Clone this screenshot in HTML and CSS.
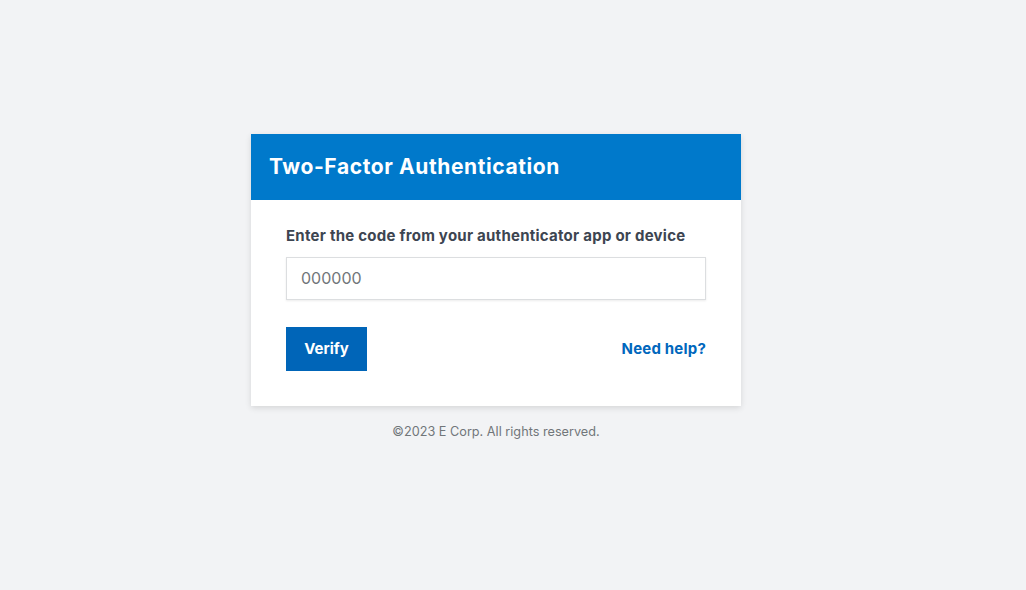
FILE: index.html
```html
<!DOCTYPE html>
<html lang="en">
<head>
<meta charset="utf-8">
<title>Two-Factor Authentication</title>
<link rel="stylesheet" href="styles.css">
</head>
<body>
<main class="page">
  <div class="wrap">
    <section class="card">
      <header class="card-header">
        <h1>Two-Factor Authentication</h1>
      </header>
      <form class="card-body">
        <label class="label" for="code">Enter the code from your authenticator app or device</label>
        <input class="input" id="code" type="text" placeholder="000000">
        <div class="actions">
          <button class="btn" type="button">Verify</button>
          <a class="help" href="#">Need help?</a>
        </div>
      </form>
    </section>
    <p class="footer">©2023 E Corp. All rights reserved.</p>
  </div>
</main>
</body>
</html>
```
FILE: styles.css
```css
html, body {
  margin: 0;
  padding: 0;
  background: #f2f3f5;
  font-family: "Inter", "Roboto", sans-serif;
  color: #3d4551;
}
.page {
  padding-top: 134px;
  padding-left: 251px;
}
.wrap {
  width: 490px;
}
.card {
  background: #ffffff;
  box-shadow: 0 2px 6px rgba(0, 0, 0, 0.12);
}
.card-header {
  background: #0079cb;
  height: 66px;
  display: flex;
  align-items: center;
  padding: 0 18px 2px;
  box-sizing: border-box;
}
.card-header h1 {
  margin: 0;
  color: #ffffff;
  font-size: 21px;
  font-weight: 700;
  letter-spacing: 0.6px;
}
.card-body {
  padding: 26px 35px 35px;
  display: flex;
  flex-direction: column;
}
.label {
  font-size: 15px;
  font-weight: 700;
  color: #3d4551;
  line-height: 20px;
  letter-spacing: 0.25px;
}
.input {
  margin-top: 11px;
  height: 43px;
  box-sizing: border-box;
  border: 1px solid #dcdee0;
  box-shadow: 0 1px 2px rgba(0, 0, 0, 0.08);
  padding: 0 14px 2px;
  font-family: inherit;
  font-size: 16px;
  color: #3d4551;
  outline: none;
}
.input::placeholder {
  color: #71767a;
}
.actions {
  margin-top: 27px;
  display: flex;
  justify-content: space-between;
  align-items: center;
}
.btn {
  background: #0065b8;
  color: #ffffff;
  border: none;
  width: 81px;
  height: 44px;
  padding: 0 0 2px;
  font-family: inherit;
  font-size: 15px;
  font-weight: 700;
  cursor: pointer;
}
.help {
  color: #0067bd;
  font-size: 15px;
  font-weight: 700;
  letter-spacing: 0.2px;
  text-decoration: none;
  margin-bottom: 2px;
}
.footer {
  margin: 18px 0 0;
  text-align: center;
  font-size: 12.7px;
  color: #71767a;
}
```
